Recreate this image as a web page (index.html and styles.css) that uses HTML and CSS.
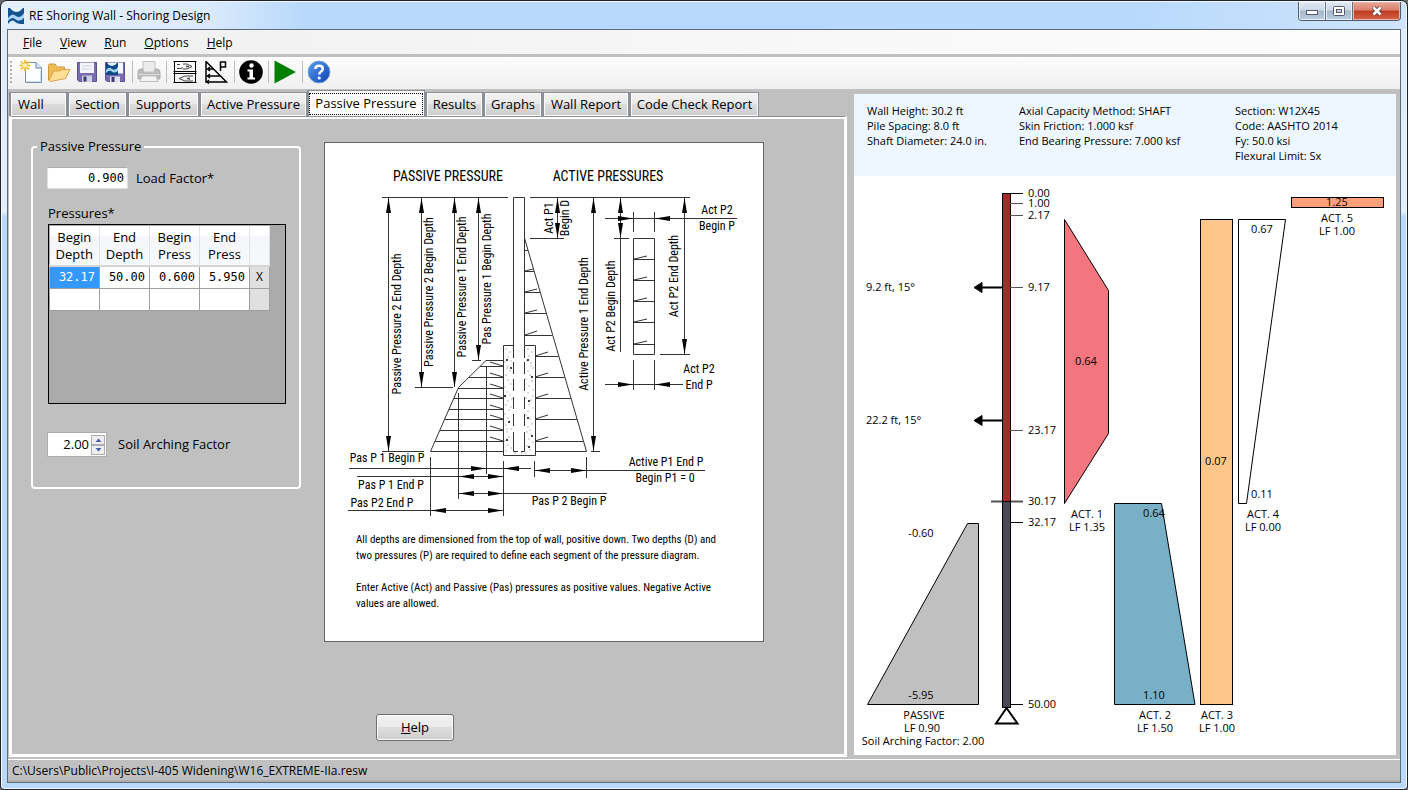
FILE: index.html
```html
<!DOCTYPE html>
<html lang="en">
<head>
<meta charset="utf-8">
<title>RE Shoring Wall - Shoring Design</title>
<link rel="stylesheet" href="styles.css">
</head>
<body>
<div class="window">
  <header class="titlebar">
    <svg class="app-icon" width="16" height="16" viewBox="0 0 16 16" aria-hidden="true">
      <rect width="16" height="16" fill="#14538f"/>
      <path d="M2 0Q5 4 9 4Q13 3 15 0Z" fill="#e6f3fc"/>
      <path d="M0 10Q4 4 8 8Q12 11 16 5V10Q11 15 7 11Q4 8 0 13Z" fill="#a8d4f5"/>
      <path d="M0 16Q3 11 6 13Q9 16 12 16Z" fill="#d8edfb"/>
    </svg>
    <h1 class="title">RE Shoring Wall - Shoring Design</h1>
    <div class="caption-buttons">
      <button class="cap" type="button" aria-label="Minimize"><svg width="14" height="10" viewBox="0 0 14 10"><rect x="1.5" y="4.500" width="11" height="4" fill="#fff" stroke="#555a66"/></svg></button>
      <button class="cap" type="button" aria-label="Maximize"><svg width="14" height="12" viewBox="0 0 14 12"><rect x="1.500" y="1.500" width="11" height="9" rx="1" fill="#fff" stroke="#555a66"/><rect x="4.500" y="4.500" width="5" height="3" fill="#c3d2e4" stroke="#555a66"/></svg></button>
      <button class="cap cap-close" type="button" aria-label="Close"><svg width="14" height="12" viewBox="0 0 14 12"><path d="M3.500 2.500L10.500 9.500M10.500 2.500L3.500 9.500" stroke="#51404a" stroke-width="4.500"/><path d="M3.500 2.500L10.500 9.500M10.500 2.500L3.500 9.500" stroke="#fff" stroke-width="2.600"/></svg></button>
    </div>
  </header>
  <div class="client">
    <nav class="menubar">
      <button class="menu" type="button"><u>F</u>ile</button>
      <button class="menu" type="button"><u>V</u>iew</button>
      <button class="menu" type="button"><u>R</u>un</button>
      <button class="menu" type="button"><u>O</u>ptions</button>
      <button class="menu" type="button"><u>H</u>elp</button>
    </nav>
    <div class="toolbar" role="toolbar" aria-label="Main">
      <span class="grip"></span>
      <button class="tool" type="button" aria-label="New"><svg width="24" height="24" viewBox="0 0 24 24"><path d="M6.500 2.500H17L22.500 8V22.500H6.500Z" fill="#fdfeff" stroke="#7d8ea6"/><path d="M17 2.500V8H22.500" fill="#dbe8f5" stroke="#5e88b5"/><path d="M8 21.500H21.500V11" fill="none" stroke="#cfe0f0"/><path d="M6 0V11M.5 5.500H11.500M2 1.500L10 9.500M10 1.500L2 9.500" stroke="#f0b818" stroke-width="1.600"/><circle cx="6" cy="5.500" r="2.200" fill="#fff3b8"/></svg></button>
      <button class="tool" type="button" aria-label="Open"><svg width="24" height="24" viewBox="0 0 24 24"><path d="M1.500 20V5.500Q1.500 4 3 4H8L10 7H17.500V11L4 21Z" fill="#eebb55" stroke="#cc9a3c"/><path d="M2 20.500L6.500 11H13L15 9.500H23L18.500 18.500L3.500 21.500Z" fill="#ffdf98" stroke="#d9a54a"/></svg></button>
      <button class="tool" type="button" aria-label="Save"><svg width="24" height="24" viewBox="0 0 24 24"><path d="M2.500 2.500H21.500V21.500H4L2.500 20Z" fill="#7a6bb0" stroke="#5c4f94"/><rect x="5" y="2.500" width="14" height="10.500" fill="#f4f6fb"/><path d="M7 6H17M7 9H17" stroke="#cfd3df"/><rect x="7" y="15.500" width="10" height="6.500" fill="#cbd2e4"/><rect x="8.500" y="16.500" width="3" height="5" fill="#3f3a6b"/></svg></button>
      <button class="tool" type="button" aria-label="Save As"><svg width="24" height="24" viewBox="0 0 24 24"><path d="M2.500 2.500H21.500V21.500H4L2.500 20Z" fill="#7a6bb0" stroke="#5c4f94"/><rect x="5" y="2.500" width="15" height="11" fill="#f4f6fb"/><rect x="3" y="3" width="12" height="12" fill="#0b4a86"/><path d="M4 3Q6 6 9 6Q12 6 14 3Z" fill="#e6f3fc"/><path d="M3 10Q6 6 9 9Q12 11 15 7V11Q11 14 8 11Q6 10 3 13Z" fill="#9fd0f3"/><rect x="7" y="16.500" width="10" height="5.500" fill="#dfe4f0"/><rect x="8.500" y="17" width="3" height="5" fill="#3f3a6b"/></svg></button>
      <span class="sep"></span>
      <button class="tool" type="button" aria-label="Print" disabled><svg width="24" height="24" viewBox="0 0 24 24"><path d="M6 1.500H18V12H6Z" fill="#ececec" stroke="#c2c2c2"/><path d="M1 12Q1 9 4 9H6V13H18V9H20Q23 9 23 12V19H1Z" fill="#bcbcbc" stroke="#adadad"/><path d="M1.500 14.500H22.500" stroke="#dcdcdc"/><path d="M5 16H19L21 21.500H3Z" fill="#f4f4f4" stroke="#bdbdbd"/></svg></button>
      <span class="sep"></span>
      <button class="tool tool-wide" type="button" aria-label="Lagging"><svg width="24" height="24" viewBox="0 0 24 24"><path d="M.5 1.500H23.500M.5 11.500H23.500M.5 13.500H23.500M.5 22.500H23.500M1.500 1V23M22.500 1V23" stroke="#000" fill="none"/><path d="M4 4.500H7M4 8.500H8L10 7.500M10 4H14L19 6.500L14 9H10M13 6L16 6.500L13 7M20 16H12L6 18.500L12 21H20M17 18L14 18.500L17 19.500" stroke="#333" stroke-width=".9" fill="none"/></svg></button>
      <button class="tool tool-wide" type="button" aria-label="Pressures"><svg width="24" height="24" viewBox="0 0 24 24"><path d="M2 1V22H22.500L2 1.500M16.500 11V2H21.500V7H16.500" fill="none" stroke="#000" stroke-width="1.500"/><path d="M2.500 9H9M2.500 16H16M6 7L3.500 9L6 11M6 14L3.500 16L6 18M5 20L3 22L5 23.500" fill="none" stroke="#000" stroke-width="1.400"/></svg></button>
      <span class="sep"></span>
      <button class="tool" type="button" aria-label="Info"><svg width="24" height="24" viewBox="0 0 24 24"><circle cx="12" cy="12" r="11.800"/><circle cx="12.500" cy="5.500" r="2.200" fill="#fff"/><path d="M8.500 9.500H14V17.500H16V19.500H8.500V17.500H10.500V11.500H8.500Z" fill="#fff"/></svg></button>
      <span class="sep"></span>
      <button class="tool" type="button" aria-label="Run"><svg width="24" height="24" viewBox="0 0 24 24"><path d="M1.500 0.500L23 12L1.500 23.500Z" fill="#008000"/></svg></button>
      <span class="sep"></span>
      <button class="tool" type="button" aria-label="Help"><svg width="24" height="24" viewBox="0 0 24 24"><defs><linearGradient id="helpFill" x1="0" y1="0" x2="1" y2="1"><stop offset="0" stop-color="#5c9ff0"/><stop offset="1" stop-color="#0d3fae"/></linearGradient></defs><circle cx="12" cy="12" r="10.900" fill="url(#helpFill)" stroke="#6f9fe0"/><path d="M8.300 9Q8.300 5.700 12 5.700Q15.800 5.700 15.800 8.800Q15.800 10.600 13.800 11.700Q12.200 12.700 12.200 14.600" fill="none" stroke="#fff" stroke-width="2.400"/><circle cx="12.200" cy="18" r="1.600" fill="#fff"/></svg></button>
    </div>
    <main class="main">
      <section class="left">
        <div class="tabs" role="tablist">
          <button class="tab" type="button" role="tab">Wall</button>
          <button class="tab" type="button" role="tab">Section</button>
          <button class="tab" type="button" role="tab">Supports</button>
          <button class="tab" type="button" role="tab">Active Pressure</button>
          <button class="tab tab-on" type="button" role="tab" aria-selected="true"><span class="focus">Passive Pressure</span></button>
          <button class="tab" type="button" role="tab">Results</button>
          <button class="tab" type="button" role="tab">Graphs</button>
          <button class="tab" type="button" role="tab">Wall Report</button>
          <button class="tab" type="button" role="tab">Code Check Report</button>
        </div>
        <div class="page">
          <div class="page-row">
            <fieldset class="group">
              <legend>Passive Pressure</legend>
              <div class="field field-load">
                <input class="num" id="load" type="text" value="0.900">
                <label for="load">Load Factor*</label>
              </div>
              <h2 class="grid-title" id="pressures">Pressures*</h2>
              <div class="grid-box">
                <table class="grid" aria-labelledby="pressures">
                  <thead>
                    <tr><th>Begin<br>Depth</th><th>End<br>Depth</th><th>Begin<br>Press</th><th>End<br>Press</th><th class="del"></th></tr>
                  </thead>
                  <tbody>
                    <tr><td class="picked">32.17</td><td>50.00</td><td>0.600</td><td>5.950</td><td class="del"><button class="remove" type="button">X</button></td></tr>
                    <tr><td></td><td></td><td></td><td></td><td class="del"></td></tr>
                  </tbody>
                </table>
              </div>
              <div class="field field-arch">
                <span class="spin">
                  <input class="spin-num" id="arch" type="text" value="2.00">
                  <span class="spin-btns">
                    <button class="step" type="button" aria-label="Increase"><svg width="7" height="4" viewBox="0 0 7 4"><path d="M0.500 4L3.500 0.500L6.500 4Z" fill="#4a5fa8"/></svg></button>
                    <button class="step" type="button" aria-label="Decrease"><svg width="7" height="4" viewBox="0 0 7 4"><path d="M0.500 0L3.500 3.500L6.500 0Z" fill="#4a5fa8"/></svg></button>
                  </span>
                </span>
                <label for="arch">Soil Arching Factor</label>
              </div>
            </fieldset>
            <figure class="sheet">
              <svg class="sheet-svg" viewBox="325 143 438 378" role="img" aria-label="Pressure definitions">
                <defs>
                  <marker id="dim" viewBox="0 0 10 5" markerWidth="15" markerHeight="5" refX="10" refY="2.500" orient="auto-start-reverse" markerUnits="userSpaceOnUse" preserveAspectRatio="none"><path class="head" d="M0 0L10 2.500L0 5Z"/></marker>
                </defs>
                <g class="ln">
                  <path d="M382 197.500H508M530 197.500H690M513.500 345V197.500H524.500V345M382 451.500H424M415 387.500H453M472 360.500H481M530 238.500H564M591 451.500H600M614 238.500H629M660 354.500H690"/>
                  <path d="M503.500 360.500H486L458.500 387.500L430.500 451.500H503.500M480 366.500H503M469 377.500H503M458 388.500H503M454 398.500H503M449 409.500H503M444 419.500H503M440 430.500H503M435 441.500H503"/>
                  <path d="M486.500 366V474M458.500 393V499M430.500 457V516M503.500 461V516M534.500 461V477M586.500 457V478"/>
                  <path d="M490 362L503 366M490 373L503 377M490 384L503 388M490 394L503 398M490 405L503 409M490 415L503 419M490 426L503 430M490 437L503 441"/>
                  <path d="M524.500 238L586.500 451.500H535M524.500 250.500H528M524.500 271.500H534M524.500 292.500H540M524.500 313.500H546M524.500 335.500H552M535 356.500H558.500M535 377.500H564.500M535 398.500H571M535 419.500H577M535 441.500H583"/>
                  <path d="M525 271L533 269M525 292L537 289M525 313L537 310M525 335L537 331M535 356L548 352M535 377L548 373M535 398L548 394M535 419L548 415M535 441L548 437"/>
                  <path d="M633.500 238.500H654.500V354.500H633.500ZM633.500 259.500H654.500M633.500 280.500H654.500M633.500 301.500H654.500M633.500 322.500H654.500M633.500 344.500H654.500M634 259L647 256M634 280L647 277M634 301L647 298M634 322L647 319M634 344L647 341"/>
                  <path d="M633.500 212V232M654.500 212V232M633.500 360V390M654.500 360V390M620.500 238V352M633 218.500H654M633 384.500H654"/>
                  <path d="M513.500 345.500H503.500V455.500H535.500V345.500H524.500V358M513.500 345V358M513.500 362V374M513.500 379V391M513.500 397V409M513.500 414V426M513.500 432V451.500H518M524.500 362V374M524.500 379V391M524.500 397V409M524.500 414V426M524.500 432V451.500H521"/>
                </g>
                <g class="ln two">
                  <path d="M388.500 198V451"/><path d="M421.500 198V387"/><path d="M454.500 198V387"/><path d="M478.500 198V360"/><path d="M557.500 198V238"/><path d="M593.500 198V451"/><path d="M620.500 198V238"/><path d="M684.500 198V354"/>
                  <path d="M459 476.500H503"/><path d="M459 493.500H503"/><path d="M431 510.500H503"/><path d="M535 470.500H586"/>
                </g>
                <g class="ln end">
                  <path d="M605 218.500H633"/><path d="M737 218.500H655"/><path d="M605 384.500H633"/><path d="M683 384.500H655"/><path d="M349 468.500H486"/><path d="M531 468.500H504"/>
                </g>
                <path class="ln" d="M486 468.500H504M357 476.500H459M503 493.500H607M348 510.500H431M586 470.500H705"/>
                <path class="dots" d="M506 349h0M510 352h0M508 357h0M505 362h0M511 361h0M507 368h0M510 371h0M506 375h0M508 380h0M511 384h0M505 387h0M507 392h0M510 395h0M505 396h0M508 401h0M506 405h0M511 407h0M509 410h0M505 414h0M508 418h0M510 421h0M506 425h0M511 429h0M507 432h0M509 437h0M505 441h0M508 445h0M511 448h0M506 451h0M515 453h0M522 453h0M528 349h0M532 352h0M529 356h0M527 361h0M531 363h0M533 368h0M528 371h0M530 375h0M526 379h0M532 381h0M529 386h0M533 390h0M528 393h0M526 398h0M531 400h0M529 405h0M533 408h0M528 411h0M526 415h0M530 419h0M532 424h0M528 427h0M527 432h0M531 434h0M529 439h0M533 442h0M527 446h0M530 450h0M526 453h0M508 366h0M531 366h0M512 399h0M533 396h0M507 429h0M530 430h0"/>
                <path class="dots big" d="M507 360h0M511 368h0M505 396h0M509 422h0M507 440h0M528 360h0M532 377h0M529 401h0M528 418h0M532 436h0M529 447h0"/>
                <g class="cad">
                  <text class="cad-title" x="448" y="181" text-anchor="middle">PASSIVE PRESSURE</text>
                  <text class="cad-title" x="608" y="181" text-anchor="middle">ACTIVE PRESSURES</text>
                  <g text-anchor="middle">
                    <text transform="translate(401 324) rotate(-90)">Passive Pressure 2 End Depth</text>
                    <text transform="translate(433 292) rotate(-90)">Passive Pressure 2 Begin Depth</text>
                    <text transform="translate(466 287) rotate(-90)">Passive Pressure 1 End Depth</text>
                    <text transform="translate(491 279) rotate(-90)">Pas Pressure 1 Begin Depth</text>
                    <text transform="translate(553 218) rotate(-90)">Act P1</text>
                    <text transform="translate(569 218) rotate(-90)">Begin D</text>
                    <text transform="translate(588 324) rotate(-90)">Active Pressure 1 End Depth</text>
                    <text transform="translate(615 306) rotate(-90)">Act P2 Begin Depth</text>
                    <text transform="translate(678 276) rotate(-90)">Act P2 End Depth</text>
                    <text x="717" y="214">Act P2</text>
                    <text x="717" y="230">Begin P</text>
                    <text x="699" y="373">Act P2</text>
                    <text x="699" y="389">End P</text>
                    <text x="387" y="462">Pas P 1 Begin P</text>
                    <text x="391" y="489">Pas P 1 End P</text>
                    <text x="382" y="507">Pas P2 End P</text>
                    <text x="569" y="505">Pas P 2 Begin P</text>
                    <text x="666" y="466">Active P1 End P</text>
                    <text x="665" y="482">Begin P1 = 0</text>
                  </g>
                </g>
              </svg>
              <figcaption class="notes">
                <p>All depths are dimensioned from the top of wall, positive down. Two depths (D) and<br>two pressures (P) are required to define each segment of the pressure diagram.</p>
                <p>Enter Active (Act) and Passive (Pas) pressures as positive values. Negative Active<br>values are allowed.</p>
              </figcaption>
            </figure>
          </div>
          <button class="help" type="button"><u>H</u>elp</button>
        </div>
      </section>
      <section class="right">
        <div class="info">
          <div>Wall Height: 30.2 ft<br>Pile Spacing: 8.0 ft<br>Shaft Diameter: 24.0 in.</div>
          <div>Axial Capacity Method: SHAFT<br>Skin Friction: 1.000 ksf<br>End Bearing Pressure: 7.000 ksf</div>
          <div>Section: W12X45<br>Code: AASHTO 2014<br>Fy: 50.0 ksi<br>Flexural Limit: Sx</div>
        </div>
        <svg class="chart" viewBox="854 176 542 578" preserveAspectRatio="xMinYMin meet" role="img" aria-label="Wall loading diagram">
          <g stroke="#000">
            <rect x="1002.500" y="193.500" width="8" height="308" fill="#a52a2a"/>
            <rect x="1002.500" y="501.500" width="8" height="206" fill="#4d4858"/>
            <path d="M1010 193.500H1023M1010 704.500H1023M1010 522.500H1023"/>
            <path d="M1010 203.500H1023M1010 215.500H1023M1010 287.500H1023M1010 430.500H1023" stroke="#555"/>
            <path d="M991 501.500H1002M1011 501.500H1023" stroke="#555" stroke-width="2"/>
            <path d="M1006.500 708L996 723.500H1017.500Z" fill="#fff" stroke-width="2"/>
            <path d="M981 287.500H1002M981 420.500H1002" stroke-width="2"/>
            <path d="M982 282.500V292.500L974 287.500ZM982 415.500V425.500L974 420.500Z" fill="#000"/>
            <path d="M1064.500 219.500L1108.500 290.500V433.500L1064.500 503.500Z" fill="#f3757d"/>
            <path d="M1114.500 503.500H1161.500L1195 704.500H1114.500Z" fill="#78b0c8"/>
            <rect x="1200.500" y="219.500" width="32" height="485" fill="#ffc68c"/>
            <path d="M1238.500 219.500H1285.500L1246.500 503.500H1238.500Z" fill="#fff"/>
            <rect x="1291.500" y="197.500" width="92" height="10" fill="#ffa07a"/>
            <path d="M967.500 523.500H978.500V704.500H867.500Z" fill="#c0c0c0"/>
          </g>
          <g class="lbl">
            <text x="1028" y="197">0.00</text><text x="1028" y="207">1.00</text><text x="1028" y="219">2.17</text><text x="1028" y="291">9.17</text><text x="1028" y="434">23.17</text><text x="1028" y="505">30.17</text><text x="1028" y="526">32.17</text><text x="1028" y="708">50.00</text>
            <text x="866" y="291">9.2 ft, 15°</text><text x="866" y="424">22.2 ft, 15°</text>
            <g text-anchor="middle">
              <text x="1086" y="365">0.64</text><text x="1154" y="517">0.64</text><text x="1154" y="699">1.10</text><text x="1216" y="465">0.07</text><text x="1262" y="233">0.67</text><text x="1262" y="498">0.11</text><text x="1337" y="206">1.25</text>
              <text x="921" y="537">-0.60</text><text x="921" y="699">-5.95</text>
              <text x="924" y="719">PASSIVE</text><text x="922" y="732">LF 0.90</text><text x="923" y="745">Soil Arching Factor: 2.00</text>
              <text x="1087" y="518">ACT. 1</text><text x="1087" y="531">LF 1.35</text>
              <text x="1155" y="719">ACT. 2</text><text x="1155" y="732">LF 1.50</text>
              <text x="1217" y="719">ACT. 3</text><text x="1217" y="732">LF 1.00</text>
              <text x="1263" y="518">ACT. 4</text><text x="1263" y="531">LF 0.00</text>
              <text x="1337" y="222">ACT. 5</text><text x="1337" y="235">LF 1.00</text>
            </g>
          </g>
        </svg>
      </section>
    </main>
    <footer class="status">C:\Users\Public\Projects\I-405 Widening\W16_EXTREME-IIa.resw</footer>
  </div>
</div>
</body>
</html>
```
FILE: styles.css
```css
* { box-sizing: border-box; }
body {
  margin: 0;
  background: #6b6b6b;
  font-family: "Open Sans", "Noto Sans", sans-serif;
  font-size: 12px;
  line-height: 17px;
  color: #000;
}
button, input { font: inherit; color: inherit; padding: 0; margin: 0; }
button { border: 0; background: none; }
h1, h2, p, figure { margin: 0; font: inherit; }
svg { display: block; }

.window {
  display: flex;
  flex-direction: column;
  min-height: 100vh;
  padding: 0 6px 6px;
  border: 1px solid #1d222b;
  border-radius: 7px 7px 4px 4px;
  background: linear-gradient(#dcebfb 0, #e3effc 210px, #b8d9fc 216px, #b8d9fc 100%);
  box-shadow: inset 0 0 0 1px #f2f8fe;
}
.titlebar {
  display: flex;
  align-items: center;
  height: 27px;
  margin: 1px -5px 0;
  padding: 0 5px 0 6px;
  border-radius: 6px 6px 0 0;
  background: linear-gradient(90deg, #e4effb 0, #dcebfb 200px, #b9d9fc 300px, #b8d9fc 80%, #cfe4fb 100%);
}
.title { flex: 1; padding-left: 5px; }
.caption-buttons {
  display: flex;
  align-self: flex-start;
  height: 19px;
  border: 1px solid #4f5a6b;
  border-top: 0;
  border-radius: 0 0 4px 4px;
  overflow: hidden;
}
.cap {
  display: grid;
  place-items: center;
  width: 27px;
  border-right: 1px solid #66727f;
  background: linear-gradient(#dfe9f3 0, #ccd9e7 45%, #a4b6ca 50%, #bccfe2 100%);
  box-shadow: inset 0 0 0 1px #e8f0f8;
}
.cap-close {
  width: 47px;
  border-right: 0;
  background: linear-gradient(#e8a896 0, #d9806c 45%, #bf3a20 50%, #d5644a 100%);
  box-shadow: inset 0 0 0 1px #eab5a8;
}

.client {
  flex: 1;
  display: flex;
  flex-direction: column;
  border: 1px solid #5d6a78;
  background: #c0c0c0;
}
.menubar {
  display: flex;
  gap: 18px;
  height: 24px;
  padding: 0 0 0 15px;
  background: linear-gradient(90deg, #f0f0f0, #fdfdfd);
}
.toolbar {
  display: flex;
  align-items: center;
  height: 32px;
  margin-top: 3px;
  padding: 0 0 2px 1px;
  background: linear-gradient(#fdfdfd, #f0f0f0);
}
.grip { width: 2px; height: 22px; margin: 0 5px 0 1px; background: repeating-linear-gradient(#b0b0b0 0, #b0b0b0 2px, #fdfdfd 2px, #fdfdfd 4px); }
.tool { display: grid; place-items: center; width: 28px; height: 28px; }
.tool-wide { width: 31px; }
.sep { width: 1px; height: 22px; margin: 0 2px 0 3px; background: #bdbdbd; }

.main {
  flex: 1;
  display: grid;
  grid-template-columns: 35fr 23fr;
}
.left { display: flex; flex-direction: column; min-width: 0; padding: 1px 1px 0 1px; }
.tabs {
  display: grid;
  grid-template-columns: 58px 60px 72px 108px 118px 58px 59px 87px 130px;
  align-items: end;
  height: 26px;
}
.tab {
  height: 24px;
  border: 1px solid #8b8f99;
  border-bottom: 0;
  border-left-width: 2px;
  background: linear-gradient(#f2f2f2 0, #ebebeb 45%, #dcdcdc 50%, #cecece 100%);
  box-shadow: inset 0 0 0 1px #fafafa;
  font-size: 13px;
  font-weight: 500;
  text-align: center;
  white-space: nowrap;
}
.tab:first-child { padding-left: 7px; text-align: left; }
.tab-on { height: 26px; padding: 2px 1px 2px 0; background: #fff; }
.focus { display: block; height: 22px; border: 1px dotted #000; line-height: 18px; }
.page {
  flex: 1;
  border: 3px solid #fff;
  border-top: 1px solid #8b8f99;
  box-shadow: inset 0 2px 0 #fff;
  margin-bottom: 2px;
  padding: 25px 10px 10px 19px;
}
.page-row { display: flex; align-items: flex-start; gap: 23px; }
.group {
  flex: none;
  width: 269px;
  height: 351px;
  margin: -4px 0 0;
  padding: 12px 13px 0 14px;
  border: 2px solid #fff;
  border-radius: 4px;
  font-size: 13px;
}
.group legend { margin-left: -10px; padding: 0 3px; }
.field { display: flex; align-items: center; }
.field-load { gap: 8px; }
.num {
  width: 81px;
  height: 22px;
  border: 1px solid #dcdfe4;
  border-top-color: #abadb3;
  border-radius: 2px;
  padding: 0 3px;
  font-family: "DejaVu Sans Mono", "Liberation Mono", monospace;
  font-size: 12px;
  text-align: right;
}
.grid-title { margin: 16px 0 2px 1px; }
.grid-box {
  width: 238px;
  height: 180px;
  margin-left: 1px;
  border: 1px solid #000;
  background: #ababab;
}
.grid { border-collapse: collapse; table-layout: fixed; width: 221px; margin-top: 1px; }
.grid th {
  height: 40px;
  padding: 0;
  border-right: 1px solid #dfe2e8;
  border-bottom: 2px solid #d5d5d5;
  background: linear-gradient(#fff 0, #fff 25%, #f4f6f9 26%, #f6f8fb 100%);
  font-weight: 400;
  line-height: 17px;
}
.grid td {
  height: 22px;
  padding: 0 4px 0 0;
  border: 1px solid #a0a0a0;
  background: #fff;
  font-family: "DejaVu Sans Mono", "Liberation Mono", monospace;
  font-size: 12px;
  text-align: right;
}
.grid .del { width: 20px; }
.grid td.del { padding: 0; background: #e0e0e0; text-align: center; }
.grid td.picked { background: #3399ff; color: #fff; }
.remove { width: 100%; font-family: "Open Sans", "Noto Sans", sans-serif; }
.field-arch { gap: 11px; margin-top: 28px; }
.spin {
  display: flex;
  align-items: center;
  width: 60px;
  height: 25px;
  padding: 1px;
  border: 1px solid #abadb3;
  background: #fff;
}
.spin-num { flex: 1; min-width: 0; border: 0; padding-right: 2px; text-align: right; background: none; }
.spin-btns { display: flex; flex-direction: column; width: 14px; height: 20px; }
.step { flex: 1; display: grid; place-items: center; border: 1px solid #abadb3; background: #eee; }

.sheet {
  flex: none;
  width: 440px;
  padding-bottom: 29px;
  border: 1px solid #646464;
  background: #fff;
}
.sheet-svg { width: 100%; }
.ln { fill: none; stroke: #333; stroke-width: 1; }
.two path { marker-start: url(#dim); marker-end: url(#dim); }
.end path { marker-end: url(#dim); }
.head { fill: #000; stroke: none; }
.dots { fill: none; stroke: #555; stroke-width: 1; stroke-linecap: round; }
.big { stroke: #000; stroke-width: 2; }
.cad, .notes { font-family: "Roboto Condensed", Roboto, sans-serif; font-size: 12px; }
.cad-title { font-size: 14px; }
.notes { padding: 11px 0 0 31px; font-size: 11px; line-height: 16px; white-space: nowrap; }
.notes p + p { margin-top: 16px; }
.help {
  display: block;
  width: 78px;
  height: 27px;
  margin: 72px 0 0 345px;
  border: 1px solid #707070;
  border-radius: 3px;
  background: linear-gradient(#f2f2f2 0, #ebebeb 48%, #dddddd 50%, #cfcfcf 100%);
  box-shadow: inset 0 0 0 1px #fafafa;
  font-size: 13px;
  font-weight: 500;
}

.right {
  display: flex;
  flex-direction: column;
  min-width: 0;
  padding: 5px 4px 4px 6px;
}
.info {
  display: grid;
  grid-template-columns: 152fr 216fr 161fr;
  padding: 9px 0 13px 13px;
  background: #eef7ff;
  font-size: 11px;
  line-height: 15px;
}
.chart { flex: 1; width: 100%; min-height: 0; background: #fff; }
.lbl { font-size: 11px; }
.status {
  height: 23px;
  padding: 1px 4px 0;
  border-top: 1px solid #fff;
  border-bottom: 2px solid #b0b0b0;
  line-height: 19px;
}
```
